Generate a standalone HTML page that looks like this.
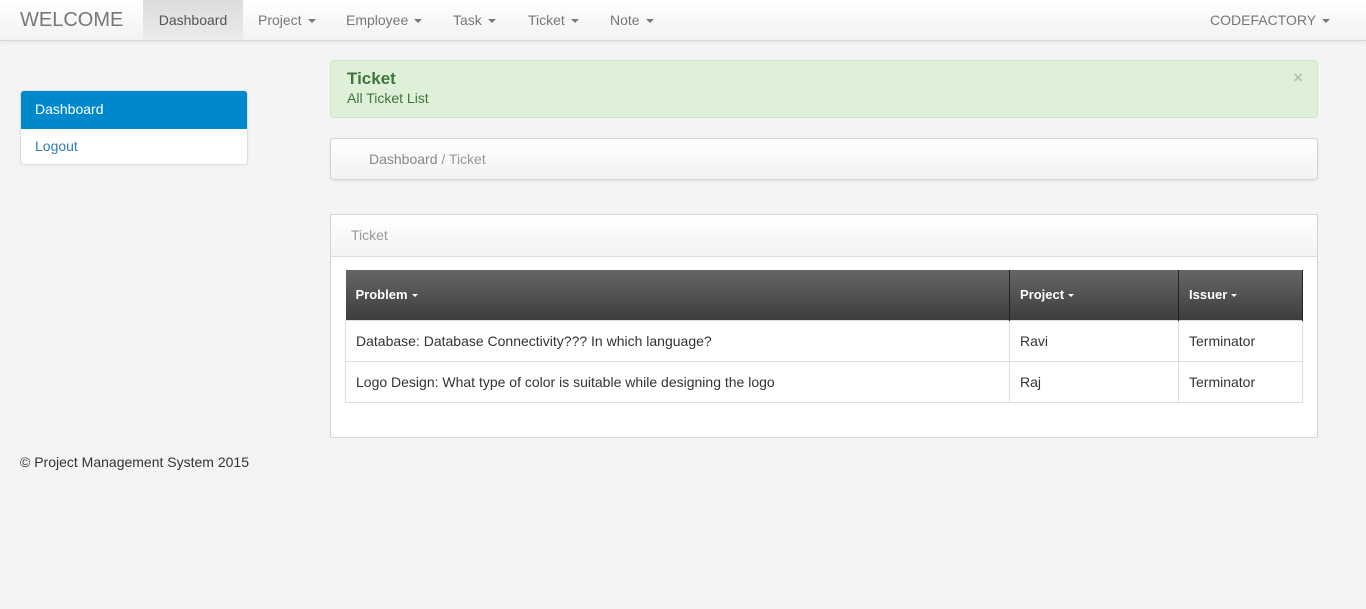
<!DOCTYPE html>
<html><head><meta charset="utf-8"><style>
*{box-sizing:border-box;margin:0;padding:0}
body{width:1366px;height:609px;background:#f4f4f4;font-family:"Liberation Sans",Arial,sans-serif;font-size:14px;color:#333;position:relative;overflow:hidden}
.nav{position:absolute;left:0;top:0;width:1366px;height:41px;background:linear-gradient(#fff,#f2f2f2);border-bottom:1px solid #d6d6d6;box-shadow:0 1px 4px rgba(0,0,0,.08)}
.nav span{position:absolute;top:0;line-height:40px;color:#777;font-size:14px}
.caret{display:inline-block;width:0;height:0;border-left:4px solid transparent;border-right:4px solid transparent;border-top:4px solid #777;vertical-align:middle;margin-left:6px}
.brand{font-size:20px!important;color:#777}
.active{background:linear-gradient(#dcdcdc,#ebebeb);color:#555!important}
.side{position:absolute;left:20px;top:90px;width:228px;height:75px;background:#fff;border:1px solid #ddd;border-radius:4px;overflow:hidden;box-shadow:0 1px 2px rgba(0,0,0,.05)}
.side .a{height:38px;background:#0088cc;color:#fff;padding-left:14px;line-height:37px}
.side .b{padding-left:14px;line-height:35px;color:#337ab7}
.alert{position:absolute;left:330px;top:60px;width:988px;height:58px;background:#dff0d8;border:1px solid #d0e6c4;border-radius:4px;color:#3c763d;padding:8px 16px}
.alert b{font-size:17px;display:block;line-height:20px;margin-bottom:1px}
.alert .x{position:absolute;right:14px;top:7px;font-weight:bold;font-size:17px;color:#b5c8ad}
.bc{position:absolute;left:330px;top:138px;width:988px;height:42px;background:linear-gradient(#fff,#f2f2f2);border:1px solid #d5d5d5;border-radius:4px;padding-left:38px;line-height:40px;color:#999;box-shadow:0 1px 3px rgba(0,0,0,.08)}
.bc .d{color:#888}
.panel{position:absolute;left:330px;top:214px;width:988px;height:224px;background:#fff;border:1px solid #d5d5d5}
.ph{height:42px;background:linear-gradient(#fff,#f3f3f3);border-bottom:1px solid #ddd;padding-left:20px;line-height:41px;color:#999}
table{position:absolute;left:14px;top:55px;width:958px;border-collapse:collapse}
th{height:50px;background:linear-gradient(#666,#3d3d3d);color:#fff;text-align:left;padding-left:10px;font-size:13px;border-right:1px solid #222}
th .caret{border-top-color:#fff;border-left-width:3px;border-right-width:3px;border-top-width:3px;margin-left:4px}
td{height:41px;border:1px solid #ddd;padding-left:10px;color:#333}
.foot{position:absolute;left:20px;top:454px;font-size:14px;color:#333}
</style></head><body>
<div class="nav">
<span class="brand" style="left:20px">WELCOME</span>
<span class="active" style="left:143px;width:100px;text-align:center;height:40px">Dashboard</span>
<span style="left:258px">Project<i class="caret"></i></span>
<span style="left:346px">Employee<i class="caret"></i></span>
<span style="left:453px">Task<i class="caret"></i></span>
<span style="left:528px">Ticket<i class="caret"></i></span>
<span style="left:610px">Note<i class="caret"></i></span>
<span style="left:1210px">CODEFACTORY<i class="caret"></i></span>
</div>
<div class="side"><div class="a">Dashboard</div><div class="b">Logout</div></div>
<div class="alert"><b>Ticket</b>All Ticket List<span class="x">×</span></div>
<div class="bc"><span class="d">Dashboard</span> / Ticket</div>
<div class="panel"><div class="ph">Ticket</div>
<table>
<tr><th style="width:664px">Problem<i class="caret"></i></th><th style="width:169px">Project<i class="caret"></i></th><th>Issuer<i class="caret"></i></th></tr>
<tr><td>Database: Database Connectivity??? In which language?</td><td>Ravi</td><td>Terminator</td></tr>
<tr><td>Logo Design: What type of color is suitable while designing the logo</td><td>Raj</td><td>Terminator</td></tr>
</table></div>
<div class="foot">© Project Management System 2015</div>
</body></html>
